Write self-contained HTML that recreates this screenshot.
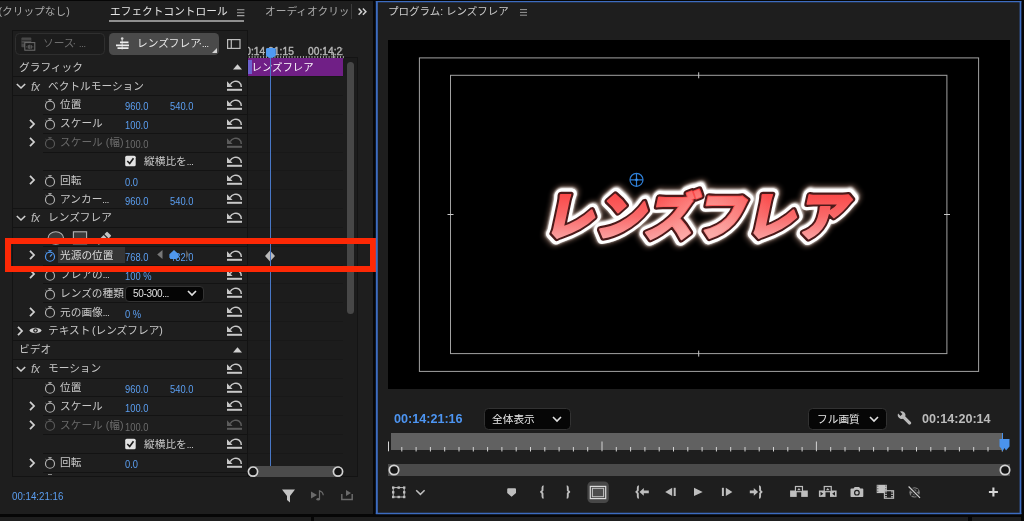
<!DOCTYPE html><html lang="ja"><head><meta charset="utf-8"><title>Premiere Pro - エフェクトコントロール</title><style>
*{box-sizing:border-box;margin:0;padding:0}
html,body{width:1024px;height:521px;overflow:hidden;background:#060606}
body{position:relative;font-family:"Liberation Sans","Noto Sans CJK JP",sans-serif;font-size:10.7px;color:#c4c4c4;-webkit-font-smoothing:antialiased}
.abs{position:absolute}
.t{position:absolute;white-space:nowrap;line-height:16px;height:16px}
#lp{will-change:transform;position:absolute;left:0;top:1px;width:373px;height:513px;background:#1e1e1e;overflow:hidden}
#rp{will-change:transform;position:absolute;left:376px;top:1px;width:645px;height:513px;background:#1e1e1e;border:1px solid transparent;background-clip:border-box;overflow:hidden}
#box{position:absolute;left:12px;top:28px;width:346px;height:447px;border:1px solid #131313;background:#1e1e1e}
.row{position:absolute;left:13px;width:234px}
.sepl{position:absolute;height:1px;background:#131313}
.lab{position:absolute;white-space:nowrap;line-height:16px;height:16px;color:#c9c9c9}
.val{position:absolute;white-space:nowrap;line-height:16px;height:16px;color:#5b9ff2;font-size:10.5px;letter-spacing:0;transform:scaleX(.89);transform-origin:0 50%}
.dim{color:#6c6c6c}
.el{font-family:"Liberation Sans",sans-serif;font-size:7px;font-weight:bold;letter-spacing:-.4px}
svg{position:absolute;overflow:visible}
</style></head><body>
<div class="abs" style="left:0;top:517px;width:311px;height:4px;background:#1e1e1e"></div>
<div class="abs" style="left:314px;top:517px;width:654px;height:4px;background:#1e1e1e"></div>
<div class="abs" style="left:972px;top:517px;width:49px;height:4px;background:#1e1e1e"></div>
<div id="lp"><div class="abs" style="left:0;top:1px;width:373px;height:512px">
<div class="t" style="left:-1.5px;top:1px;color:#a8a8a8">(クリップなし)</div>
<div class="t" style="left:110px;top:1px;color:#e4e4e4">エフェクトコントロール</div>
<div class="abs" style="left:109px;top:18px;width:135px;height:2px;background:#909090"></div>
<svg style="left:237.2px;top:7px" width="9" height="8"><path d="M0 .8h7.4M0 3.7h7.4M0 6.6h7.4" stroke="#a2a2a2" stroke-width="1.1"/></svg>
<div class="t" style="left:265px;top:1px;color:#a8a8a8;width:84px;overflow:hidden">オーディオクリップ</div>
<div class="abs" style="left:351px;top:2px;width:1px;height:15px;background:#3c3c3c"></div>
<svg style="left:358.3px;top:5.7px" width="10" height="8"><path d="M.6 .6l3 3.1-3 3.1M4.9 .6l3 3.1-3 3.1" fill="none" stroke="#d0d0d0" stroke-width="1.5"/></svg>
<div id="box"></div>
<div class="abs" style="left:248px;top:55px;width:110px;height:420px;background:#1c1c1c;border-top:1px solid #141414;border-right:1px solid #141414"></div>
<div class="abs" style="left:247px;top:28px;width:1px;height:447px;background:#131313"></div>
<div class="abs" style="left:248px;top:28px;width:111px;height:27px;background:#1e1e1e"></div>
<div class="abs" style="left:15px;top:31px;width:90px;height:22px;border:1px solid #2f2f2f;border-radius:4.5px;background:#1c1c1c"></div>
<svg style="left:21px;top:35px" width="15" height="14"><rect x=".4" y=".6" width="9.9" height="9.7" rx=".8" fill="#484848"/><path d="M.4 3.4h10M.4 6.2h10" stroke="#2a2a2a" stroke-width=".9"/><rect x="3.8" y="5.6" width="10" height="7.6" fill="#1c1c1c" stroke="#707070" stroke-width="1"/><path d="M5.8 9.4v1M7.3 8.2v3.4M8.8 7.7v4.4M10.3 8.2v3.4M11.8 9.4v1" stroke="#707070" stroke-width=".9"/></svg>
<div class="t" style="left:43px;top:33px;color:#6e6e6e">ソース<span style="margin-left:-2px">·</span><span class="el" style="margin-left:3px">…</span></div>
<div class="abs" style="left:109px;top:31px;width:110px;height:22px;background:#4a4a4a;border-radius:4.5px"></div>
<svg style="left:116px;top:35px" width="13" height="13"><path d="M6.2 1.5v11" stroke="#a9a9a9" stroke-width="1.3"/><circle cx="6.2" cy="1.5" r="1.3" fill="#d8d8d8"/><path d="M4 5.3h8.5M0 8.3h13M1.5 11.2h11" stroke="#ececec" stroke-width="1.7"/></svg>
<div class="t" style="left:137px;top:33px;color:#e8e8e8">レンズフレア<span style="margin-left:-2.5px">·</span><span class="el" style="margin-left:0px">…</span></div>
<svg style="left:212px;top:46px" width="5" height="5"><path d="M5 0v5h-5z" fill="#d4d4d4"/></svg>
<svg style="left:227px;top:37px" width="14" height="10"><rect x=".6" y=".6" width="12.4" height="8.8" fill="none" stroke="#bdbdbd" stroke-width="1.2"/><path d="M4.3 .6v8.8" stroke="#bdbdbd" stroke-width="1.2"/></svg>
<div class="abs" style="left:248px;top:40px;width:95px;height:16px;overflow:hidden"><div class="t" style="left:-8.5px;top:2px;color:#b6b6b6;font-size:10.2px;-webkit-text-stroke:.4px #b6b6b6;letter-spacing:.05px">00:14:21:15</div><div class="t" style="left:60px;top:2px;color:#b6b6b6;font-size:10.2px;-webkit-text-stroke:.4px #b6b6b6;letter-spacing:.05px">00:14:22</div></div>
<svg style="left:248px;top:54.4px" width="95" height="3"><path d="M1.30 0v2.2M4.15 0v2.2M7.00 0v2.2M9.85 0v2.2M12.70 0v2.2M15.55 0v2.2M18.40 0v2.2M21.25 0v2.2M24.10 0v2.2M26.95 0v2.2M29.80 0v2.2M32.65 0v2.2M35.50 0v2.2M38.35 0v2.2M41.20 0v2.2M44.05 0v2.2M46.90 0v2.2M49.75 0v2.2M52.60 0v2.2M55.45 0v2.2M58.30 0v2.2M61.15 0v2.2M64.00 0v2.2M66.85 0v2.2M69.70 0v2.2M72.55 0v2.2M75.40 0v2.2M78.25 0v2.2M81.10 0v2.2M83.95 0v2.2M86.80 0v2.2M89.65 0v2.2M92.50 0v2.2M95.35 0v2.2" stroke="#a4a4a4" stroke-width="1"/></svg>
<div class="abs" style="left:333px;top:51px;width:1px;height:5px;background:#b0b0b0"></div>
<div class="abs" style="left:248px;top:56px;width:95px;height:18px;background:#701f86"></div>
<div class="abs" style="left:248px;top:58px;width:4px;height:14px;background:#6d62cf"></div>
<div class="t" style="left:251.5px;top:58px;color:#fff;font-size:10.4px">レンズフレア</div>
<div class="abs" style="left:347px;top:60px;width:7px;height:252px;background:#474747;border-radius:4px"></div>
<div class="sepl" style="left:13px;top:74.0px;width:234px"></div>
<div class="sepl" style="left:248px;top:74.0px;width:95px;background:#181818"></div>
<div class="lab" style="left:19px;top:57.0px">グラフィック</div>
<svg style="left:233px;top:61.9px" width="9" height="6"><path d="M0 5.5L4.5 .3 9 5.5z" fill="#d0d0d0"/></svg>
<div class="sepl" style="left:13px;top:93.0px;width:234px"></div>
<div class="sepl" style="left:248px;top:93.0px;width:95px;background:#181818"></div>
<svg style="left:16px;top:81.0px" width="10" height="7"><path d="M.8 1l4.2 4L9.2 1" fill="none" stroke="#d0d0d0" stroke-width="1.6"/></svg>
<div class="t" style="left:31px;top:77px;font-style:italic;font-size:12.5px;color:#b4b4b4;letter-spacing:-.6px">fx</div>
<div class="lab" style="left:48px;top:76.0px">ベクトルモーション</div>
<svg style="left:227px;top:78.2px" width="15" height="12"><path d="M0 9.8h15" stroke="#c8c8c8" stroke-width="2"/><path d="M0 1.3v5.6h5.6z" fill="#c8c8c8"/><path d="M3.2 4.6C5.2 1.2 9.3 .2 12 2.2c1.6 1.2 2.3 2.9 2.3 4.7" fill="none" stroke="#c8c8c8" stroke-width="1.45"/></svg>
<div class="sepl" style="left:43px;top:112.0px;width:204px"></div>
<div class="sepl" style="left:248px;top:112.0px;width:95px;background:#181818"></div>
<svg style="left:44px;top:95.1px" width="12" height="15"><circle cx="6" cy="8.7" r="4.5" fill="none" stroke="#b4b4b4" stroke-width="1.150"/><path d="M4.3 2.7h3.4M6 2.7v1.6M1.7 4.3l1.1 1.1" fill="none" stroke="#b4b4b4" stroke-width="1"/></svg>
<div class="lab" style="left:60px;top:94.0px;color:#c9c9c9">位置</div>
<div class="val" style="left:124.5px;top:96.0px">960.0</div>
<div class="val" style="left:170.0px;top:96.0px">540.0</div>
<svg style="left:227px;top:97.0px" width="15" height="12"><path d="M0 9.8h15" stroke="#c8c8c8" stroke-width="2"/><path d="M0 1.3v5.6h5.6z" fill="#c8c8c8"/><path d="M3.2 4.6C5.2 1.2 9.3 .2 12 2.2c1.6 1.2 2.3 2.9 2.3 4.7" fill="none" stroke="#c8c8c8" stroke-width="1.45"/></svg>
<div class="sepl" style="left:43px;top:131.0px;width:204px"></div>
<div class="sepl" style="left:248px;top:131.0px;width:95px;background:#181818"></div>
<svg style="left:29px;top:116.5px" width="7" height="10"><path d="M1 .8l4 4.2L1 9.2" fill="none" stroke="#d0d0d0" stroke-width="1.8"/></svg>
<svg style="left:44px;top:113.9px" width="12" height="15"><circle cx="6" cy="8.7" r="4.5" fill="none" stroke="#b4b4b4" stroke-width="1.150"/><path d="M4.3 2.7h3.4M6 2.7v1.6M1.7 4.3l1.1 1.1" fill="none" stroke="#b4b4b4" stroke-width="1"/></svg>
<div class="lab" style="left:60px;top:113.0px;color:#c9c9c9">スケール</div>
<div class="val" style="left:124.5px;top:115.0px">100.0</div>
<svg style="left:227px;top:115.8px" width="15" height="12"><path d="M0 9.8h15" stroke="#c8c8c8" stroke-width="2"/><path d="M0 1.3v5.6h5.6z" fill="#c8c8c8"/><path d="M3.2 4.6C5.2 1.2 9.3 .2 12 2.2c1.6 1.2 2.3 2.9 2.3 4.7" fill="none" stroke="#c8c8c8" stroke-width="1.45"/></svg>
<div class="sepl" style="left:43px;top:150.0px;width:204px"></div>
<div class="sepl" style="left:248px;top:150.0px;width:95px;background:#181818"></div>
<svg style="left:29px;top:135.4px" width="7" height="10"><path d="M1 .8l4 4.2L1 9.2" fill="none" stroke="#d0d0d0" stroke-width="1.8"/></svg>
<svg style="left:44px;top:132.8px" width="12" height="15"><circle cx="6" cy="8.7" r="4.5" fill="none" stroke="#5a5a5a" stroke-width="1.150"/><path d="M4.3 2.7h3.4M6 2.7v1.6M1.7 4.3l1.1 1.1" fill="none" stroke="#5a5a5a" stroke-width="1"/></svg>
<div class="lab" style="left:60px;top:132.0px;color:#6a6a6a">スケール (幅)</div>
<div class="val dim" style="left:124.5px;top:134.0px">100.0</div>
<svg style="left:227px;top:134.7px" width="15" height="12"><path d="M0 9.8h15" stroke="#5c5c5c" stroke-width="2"/><path d="M0 1.3v5.6h5.6z" fill="#5c5c5c"/><path d="M3.2 4.6C5.2 1.2 9.3 .2 12 2.2c1.6 1.2 2.3 2.9 2.3 4.7" fill="none" stroke="#5c5c5c" stroke-width="1.45"/></svg>
<div class="sepl" style="left:43px;top:168.0px;width:204px"></div>
<div class="sepl" style="left:248px;top:168.0px;width:95px;background:#181818"></div>
<svg style="left:125px;top:153.2px" width="12" height="12"><rect x=".2" y=".7" width="10.5" height="10.5" rx="1.5" fill="#e3e3e3"/><path d="M2.3 6l2.4 2.5L8.5 3.2" fill="none" stroke="#1c1c1c" stroke-width="1.6"/></svg>
<div class="lab" style="left:144px;top:151.0px">縦横比を<span class="el">…</span></div>
<svg style="left:227px;top:153.5px" width="15" height="12"><path d="M0 9.8h15" stroke="#c8c8c8" stroke-width="2"/><path d="M0 1.3v5.6h5.6z" fill="#c8c8c8"/><path d="M3.2 4.6C5.2 1.2 9.3 .2 12 2.2c1.6 1.2 2.3 2.9 2.3 4.7" fill="none" stroke="#c8c8c8" stroke-width="1.45"/></svg>
<div class="sepl" style="left:43px;top:187.0px;width:204px"></div>
<div class="sepl" style="left:248px;top:187.0px;width:95px;background:#181818"></div>
<svg style="left:29px;top:173.1px" width="7" height="10"><path d="M1 .8l4 4.2L1 9.2" fill="none" stroke="#d0d0d0" stroke-width="1.8"/></svg>
<svg style="left:44px;top:170.5px" width="12" height="15"><circle cx="6" cy="8.7" r="4.5" fill="none" stroke="#b4b4b4" stroke-width="1.150"/><path d="M4.3 2.7h3.4M6 2.7v1.6M1.7 4.3l1.1 1.1" fill="none" stroke="#b4b4b4" stroke-width="1"/></svg>
<div class="lab" style="left:60px;top:170.0px;color:#c9c9c9">回転</div>
<div class="val" style="left:124.5px;top:172.0px">0.0</div>
<svg style="left:227px;top:172.4px" width="15" height="12"><path d="M0 9.8h15" stroke="#c8c8c8" stroke-width="2"/><path d="M0 1.3v5.6h5.6z" fill="#c8c8c8"/><path d="M3.2 4.6C5.2 1.2 9.3 .2 12 2.2c1.6 1.2 2.3 2.9 2.3 4.7" fill="none" stroke="#c8c8c8" stroke-width="1.45"/></svg>
<div class="sepl" style="left:13px;top:206.0px;width:234px"></div>
<div class="sepl" style="left:248px;top:206.0px;width:95px;background:#181818"></div>
<svg style="left:44px;top:189.3px" width="12" height="15"><circle cx="6" cy="8.7" r="4.5" fill="none" stroke="#b4b4b4" stroke-width="1.150"/><path d="M4.3 2.7h3.4M6 2.7v1.6M1.7 4.3l1.1 1.1" fill="none" stroke="#b4b4b4" stroke-width="1"/></svg>
<div class="lab" style="left:60px;top:189.0px;color:#c9c9c9">アンカー<span class="el">…</span></div>
<div class="val" style="left:124.5px;top:191.0px">960.0</div>
<div class="val" style="left:170.0px;top:191.0px">540.0</div>
<svg style="left:227px;top:191.2px" width="15" height="12"><path d="M0 9.8h15" stroke="#c8c8c8" stroke-width="2"/><path d="M0 1.3v5.6h5.6z" fill="#c8c8c8"/><path d="M3.2 4.6C5.2 1.2 9.3 .2 12 2.2c1.6 1.2 2.3 2.9 2.3 4.7" fill="none" stroke="#c8c8c8" stroke-width="1.45"/></svg>
<div class="sepl" style="left:13px;top:225.0px;width:234px"></div>
<div class="sepl" style="left:248px;top:225.0px;width:95px;background:#181818"></div>
<svg style="left:16px;top:212.8px" width="10" height="7"><path d="M.8 1l4.2 4L9.2 1" fill="none" stroke="#d0d0d0" stroke-width="1.6"/></svg>
<div class="t" style="left:31px;top:208px;font-style:italic;font-size:12.5px;color:#b4b4b4;letter-spacing:-.6px">fx</div>
<div class="lab" style="left:48px;top:207.0px">レンズフレア</div>
<svg style="left:227px;top:210.0px" width="15" height="12"><path d="M0 9.8h15" stroke="#c8c8c8" stroke-width="2"/><path d="M0 1.3v5.6h5.6z" fill="#c8c8c8"/><path d="M3.2 4.6C5.2 1.2 9.3 .2 12 2.2c1.6 1.2 2.3 2.9 2.3 4.7" fill="none" stroke="#c8c8c8" stroke-width="1.45"/></svg>
<div class="sepl" style="left:43px;top:244.0px;width:204px"></div>
<div class="sepl" style="left:248px;top:244.0px;width:95px;background:#181818"></div>
<svg style="left:47px;top:229.1px" width="42" height="14"><ellipse cx="8.8" cy="7" rx="7.7" ry="6.2" fill="#3a3a3a" stroke="#b4b4b4" stroke-width="1.1"/><rect x="26.4" y=".8" width="13.2" height="12" fill="#3a3a3a" stroke="#b4b4b4" stroke-width="1.1"/></svg>
<svg style="left:0;top:0" width="120" height="250"><g transform="translate(98 242.8) rotate(45)" fill="#c2c2c2"><path d="M0 0L3 -6v-5h-6v5z"/><rect x="-3" y="-15.8" width="6" height="3.8" rx=".6"/></g></svg>
<div class="sepl" style="left:43px;top:263.0px;width:204px"></div>
<div class="sepl" style="left:248px;top:263.0px;width:95px;background:#181818"></div>
<svg style="left:29px;top:248.4px" width="7" height="10"><path d="M1 .8l4 4.2L1 9.2" fill="none" stroke="#d0d0d0" stroke-width="1.8"/></svg>
<svg style="left:44px;top:245.8px" width="12" height="15"><circle cx="6" cy="8.7" r="4.5" fill="none" stroke="#4f98f0" stroke-width="1.150"/><path d="M4.3 2.7h3.4M6 2.7v1.6M1.7 4.3l1.1 1.1" fill="none" stroke="#4f98f0" stroke-width="1"/><path d="M6 8.7l2.1-2.6" stroke="#4f98f0" stroke-width="1.2"/></svg>
<div class="abs" style="left:58px;top:245.0px;width:67px;height:16px;background:#353535"></div>
<div class="lab" style="left:60px;top:245.0px;color:#dcdcdc">光源の位置</div>
<div class="val" style="left:124.6px;top:247.0px">768.0</div>
<div class="val" style="left:169.8px;top:247.0px">432.0</div>
<svg style="left:156px;top:248.3px" width="36" height="10"><path d="M6.5 0v9L1.2 4.5z" fill="#787878"/><path d="M18 0l4.6 4.2v3.6l-2.3 1.2h-4.6l-2.3-1.2v-3.6z" fill="#4f98f0"/><path d="M30 0v9l3-4.5z" fill="#6a6a6a" opacity=".85"/></svg>
<svg style="left:227px;top:247.7px" width="15" height="12"><path d="M0 9.8h15" stroke="#c8c8c8" stroke-width="2"/><path d="M0 1.3v5.6h5.6z" fill="#c8c8c8"/><path d="M3.2 4.6C5.2 1.2 9.3 .2 12 2.2c1.6 1.2 2.3 2.9 2.3 4.7" fill="none" stroke="#c8c8c8" stroke-width="1.45"/></svg>
<svg style="left:264px;top:247.5px" width="12" height="12"><path d="M6 .5l5 5.5-5 5.5-5-5.5z" fill="#b9b9b9"/></svg>
<div class="sepl" style="left:43px;top:281.0px;width:204px"></div>
<div class="sepl" style="left:248px;top:281.0px;width:95px;background:#181818"></div>
<svg style="left:29px;top:267.3px" width="7" height="10"><path d="M1 .8l4 4.2L1 9.2" fill="none" stroke="#d0d0d0" stroke-width="1.8"/></svg>
<svg style="left:44px;top:264.7px" width="12" height="15"><circle cx="6" cy="8.7" r="4.5" fill="none" stroke="#b4b4b4" stroke-width="1.150"/><path d="M4.3 2.7h3.4M6 2.7v1.6M1.7 4.3l1.1 1.1" fill="none" stroke="#b4b4b4" stroke-width="1"/></svg>
<div class="lab" style="left:60px;top:264.0px;color:#c9c9c9">フレアの<span class="el">…</span></div>
<div class="val" style="left:124.5px;top:266.0px">100 %</div>
<svg style="left:227px;top:266.6px" width="15" height="12"><path d="M0 9.8h15" stroke="#c8c8c8" stroke-width="2"/><path d="M0 1.3v5.6h5.6z" fill="#c8c8c8"/><path d="M3.2 4.6C5.2 1.2 9.3 .2 12 2.2c1.6 1.2 2.3 2.9 2.3 4.7" fill="none" stroke="#c8c8c8" stroke-width="1.45"/></svg>
<div class="sepl" style="left:43px;top:300.0px;width:204px"></div>
<div class="sepl" style="left:248px;top:300.0px;width:95px;background:#181818"></div>
<svg style="left:44px;top:283.5px" width="12" height="15"><circle cx="6" cy="8.7" r="4.5" fill="none" stroke="#b4b4b4" stroke-width="1.150"/><path d="M4.3 2.7h3.4M6 2.7v1.6M1.7 4.3l1.1 1.1" fill="none" stroke="#b4b4b4" stroke-width="1"/></svg>
<div class="lab" style="left:60px;top:283.0px">レンズの種類</div>
<div class="abs" style="left:125px;top:284px;width:79px;height:16px;background:#050505;border:1px solid #333;border-radius:4px"></div>
<div class="lab" style="left:133px;top:284.0px;color:#e0e0e0;font-size:10px;letter-spacing:-.3px">50-300<span class="el">…</span></div>
<svg style="left:187px;top:288.0px" width="10" height="7"><path d="M1 1l4 4 4-4" fill="none" stroke="#e0e0e0" stroke-width="1.7"/></svg>
<svg style="left:227px;top:285.4px" width="15" height="12"><path d="M0 9.8h15" stroke="#c8c8c8" stroke-width="2"/><path d="M0 1.3v5.6h5.6z" fill="#c8c8c8"/><path d="M3.2 4.6C5.2 1.2 9.3 .2 12 2.2c1.6 1.2 2.3 2.9 2.3 4.7" fill="none" stroke="#c8c8c8" stroke-width="1.45"/></svg>
<div class="sepl" style="left:13px;top:319.0px;width:234px"></div>
<div class="sepl" style="left:248px;top:319.0px;width:95px;background:#181818"></div>
<svg style="left:29px;top:304.9px" width="7" height="10"><path d="M1 .8l4 4.2L1 9.2" fill="none" stroke="#d0d0d0" stroke-width="1.8"/></svg>
<svg style="left:44px;top:302.3px" width="12" height="15"><circle cx="6" cy="8.7" r="4.5" fill="none" stroke="#b4b4b4" stroke-width="1.150"/><path d="M4.3 2.7h3.4M6 2.7v1.6M1.7 4.3l1.1 1.1" fill="none" stroke="#b4b4b4" stroke-width="1"/></svg>
<div class="lab" style="left:60px;top:302.0px;color:#c9c9c9">元の画像<span class="el">…</span></div>
<div class="val" style="left:124.5px;top:304.0px">0 %</div>
<svg style="left:227px;top:304.2px" width="15" height="12"><path d="M0 9.8h15" stroke="#c8c8c8" stroke-width="2"/><path d="M0 1.3v5.6h5.6z" fill="#c8c8c8"/><path d="M3.2 4.6C5.2 1.2 9.3 .2 12 2.2c1.6 1.2 2.3 2.9 2.3 4.7" fill="none" stroke="#c8c8c8" stroke-width="1.45"/></svg>
<div class="sepl" style="left:13px;top:338.0px;width:234px"></div>
<div class="sepl" style="left:248px;top:338.0px;width:95px;background:#181818"></div>
<svg style="left:17px;top:323.8px" width="7" height="10"><path d="M1 .8l4 4.2L1 9.2" fill="none" stroke="#d0d0d0" stroke-width="1.8"/></svg>
<svg style="left:29px;top:324.2px" width="13" height="9"><path d="M.3 4.5C2.5 .8 10.5 .8 12.7 4.5 10.5 8.2 2.5 8.2 .3 4.5z" fill="#d0d0d0"/><circle cx="6.5" cy="4.5" r="2.3" fill="#1e1e1e"/><circle cx="6.5" cy="4.5" r="1.1" fill="#d0d0d0"/></svg>
<div class="lab" style="left:48px;top:320.0px"><span style="word-spacing:-1.5px">テキスト (レンズフレア)</span></div>
<svg style="left:227px;top:323.1px" width="15" height="12"><path d="M0 9.8h15" stroke="#c8c8c8" stroke-width="2"/><path d="M0 1.3v5.6h5.6z" fill="#c8c8c8"/><path d="M3.2 4.6C5.2 1.2 9.3 .2 12 2.2c1.6 1.2 2.3 2.9 2.3 4.7" fill="none" stroke="#c8c8c8" stroke-width="1.45"/></svg>
<div class="sepl" style="left:13px;top:357.0px;width:234px"></div>
<div class="sepl" style="left:248px;top:357.0px;width:95px;background:#181818"></div>
<div class="lab" style="left:19px;top:339.0px">ビデオ</div>
<svg style="left:233px;top:344.5px" width="9" height="6"><path d="M0 5.5L4.5 .3 9 5.5z" fill="#d0d0d0"/></svg>
<div class="sepl" style="left:13px;top:376.0px;width:234px"></div>
<div class="sepl" style="left:248px;top:376.0px;width:95px;background:#181818"></div>
<svg style="left:16px;top:363.6px" width="10" height="7"><path d="M.8 1l4.2 4L9.2 1" fill="none" stroke="#d0d0d0" stroke-width="1.6"/></svg>
<div class="t" style="left:31px;top:359px;font-style:italic;font-size:12.5px;color:#b4b4b4;letter-spacing:-.6px">fx</div>
<div class="lab" style="left:48px;top:358.0px">モーション</div>
<svg style="left:227px;top:360.8px" width="15" height="12"><path d="M0 9.8h15" stroke="#c8c8c8" stroke-width="2"/><path d="M0 1.3v5.6h5.6z" fill="#c8c8c8"/><path d="M3.2 4.6C5.2 1.2 9.3 .2 12 2.2c1.6 1.2 2.3 2.9 2.3 4.7" fill="none" stroke="#c8c8c8" stroke-width="1.45"/></svg>
<div class="sepl" style="left:43px;top:394.0px;width:204px"></div>
<div class="sepl" style="left:248px;top:394.0px;width:95px;background:#181818"></div>
<svg style="left:44px;top:377.7px" width="12" height="15"><circle cx="6" cy="8.7" r="4.5" fill="none" stroke="#b4b4b4" stroke-width="1.150"/><path d="M4.3 2.7h3.4M6 2.7v1.6M1.7 4.3l1.1 1.1" fill="none" stroke="#b4b4b4" stroke-width="1"/></svg>
<div class="lab" style="left:60px;top:377.0px;color:#c9c9c9">位置</div>
<div class="val" style="left:124.5px;top:379.0px">960.0</div>
<div class="val" style="left:170.0px;top:379.0px">540.0</div>
<svg style="left:227px;top:379.6px" width="15" height="12"><path d="M0 9.8h15" stroke="#c8c8c8" stroke-width="2"/><path d="M0 1.3v5.6h5.6z" fill="#c8c8c8"/><path d="M3.2 4.6C5.2 1.2 9.3 .2 12 2.2c1.6 1.2 2.3 2.9 2.3 4.7" fill="none" stroke="#c8c8c8" stroke-width="1.45"/></svg>
<div class="sepl" style="left:43px;top:413.0px;width:204px"></div>
<div class="sepl" style="left:248px;top:413.0px;width:95px;background:#181818"></div>
<svg style="left:29px;top:399.1px" width="7" height="10"><path d="M1 .8l4 4.2L1 9.2" fill="none" stroke="#d0d0d0" stroke-width="1.8"/></svg>
<svg style="left:44px;top:396.5px" width="12" height="15"><circle cx="6" cy="8.7" r="4.5" fill="none" stroke="#b4b4b4" stroke-width="1.150"/><path d="M4.3 2.7h3.4M6 2.7v1.6M1.7 4.3l1.1 1.1" fill="none" stroke="#b4b4b4" stroke-width="1"/></svg>
<div class="lab" style="left:60px;top:396.0px;color:#c9c9c9">スケール</div>
<div class="val" style="left:124.5px;top:398.0px">100.0</div>
<svg style="left:227px;top:398.4px" width="15" height="12"><path d="M0 9.8h15" stroke="#c8c8c8" stroke-width="2"/><path d="M0 1.3v5.6h5.6z" fill="#c8c8c8"/><path d="M3.2 4.6C5.2 1.2 9.3 .2 12 2.2c1.6 1.2 2.3 2.9 2.3 4.7" fill="none" stroke="#c8c8c8" stroke-width="1.45"/></svg>
<div class="sepl" style="left:43px;top:432.0px;width:204px"></div>
<div class="sepl" style="left:248px;top:432.0px;width:95px;background:#181818"></div>
<svg style="left:29px;top:418.0px" width="7" height="10"><path d="M1 .8l4 4.2L1 9.2" fill="none" stroke="#d0d0d0" stroke-width="1.8"/></svg>
<svg style="left:44px;top:415.4px" width="12" height="15"><circle cx="6" cy="8.7" r="4.5" fill="none" stroke="#5a5a5a" stroke-width="1.150"/><path d="M4.3 2.7h3.4M6 2.7v1.6M1.7 4.3l1.1 1.1" fill="none" stroke="#5a5a5a" stroke-width="1"/></svg>
<div class="lab" style="left:60px;top:415.0px;color:#6a6a6a">スケール (幅)</div>
<div class="val dim" style="left:124.5px;top:417.0px">100.0</div>
<svg style="left:227px;top:417.3px" width="15" height="12"><path d="M0 9.8h15" stroke="#5c5c5c" stroke-width="2"/><path d="M0 1.3v5.6h5.6z" fill="#5c5c5c"/><path d="M3.2 4.6C5.2 1.2 9.3 .2 12 2.2c1.6 1.2 2.3 2.9 2.3 4.7" fill="none" stroke="#5c5c5c" stroke-width="1.45"/></svg>
<div class="sepl" style="left:43px;top:451.0px;width:204px"></div>
<div class="sepl" style="left:248px;top:451.0px;width:95px;background:#181818"></div>
<svg style="left:125px;top:435.8px" width="12" height="12"><rect x=".2" y=".7" width="10.5" height="10.5" rx="1.5" fill="#e3e3e3"/><path d="M2.3 6l2.4 2.5L8.5 3.2" fill="none" stroke="#1c1c1c" stroke-width="1.6"/></svg>
<div class="lab" style="left:144px;top:434.0px">縦横比を<span class="el">…</span></div>
<svg style="left:227px;top:436.1px" width="15" height="12"><path d="M0 9.8h15" stroke="#c8c8c8" stroke-width="2"/><path d="M0 1.3v5.6h5.6z" fill="#c8c8c8"/><path d="M3.2 4.6C5.2 1.2 9.3 .2 12 2.2c1.6 1.2 2.3 2.9 2.3 4.7" fill="none" stroke="#c8c8c8" stroke-width="1.45"/></svg>
<div class="sepl" style="left:43px;top:470.0px;width:204px"></div>
<div class="sepl" style="left:248px;top:470.0px;width:95px;background:#181818"></div>
<svg style="left:29px;top:455.7px" width="7" height="10"><path d="M1 .8l4 4.2L1 9.2" fill="none" stroke="#d0d0d0" stroke-width="1.8"/></svg>
<svg style="left:44px;top:453.1px" width="12" height="15"><circle cx="6" cy="8.7" r="4.5" fill="none" stroke="#b4b4b4" stroke-width="1.150"/><path d="M4.3 2.7h3.4M6 2.7v1.6M1.7 4.3l1.1 1.1" fill="none" stroke="#b4b4b4" stroke-width="1"/></svg>
<div class="lab" style="left:60px;top:452.0px;color:#c9c9c9">回転</div>
<div class="val" style="left:124.5px;top:454.0px">0.0</div>
<svg style="left:227px;top:455.0px" width="15" height="12"><path d="M0 9.8h15" stroke="#c8c8c8" stroke-width="2"/><path d="M0 1.3v5.6h5.6z" fill="#c8c8c8"/><path d="M3.2 4.6C5.2 1.2 9.3 .2 12 2.2c1.6 1.2 2.3 2.9 2.3 4.7" fill="none" stroke="#c8c8c8" stroke-width="1.45"/></svg>
<div class="abs" style="left:48px;top:472px;width:4px;height:1px;background:#8a8a8a"></div>
<div class="abs" style="left:0;top:475px;width:373px;height:40px;background:#1e1e1e"></div>
<div class="abs" style="left:12px;top:474px;width:346px;height:1px;background:#131313"></div>
<div class="abs" style="left:270px;top:50px;width:1px;height:414px;background:#4877c6"></div>
<svg style="left:265.9px;top:46px" width="10" height="10"><path d="M1.5 0h6.8a1.5 1.5 0 0 1 1.5 1.5v6L7 9.7h-4.2L0 7.5v-6A1.5 1.5 0 0 1 1.5 0z" fill="#4f9af3"/></svg>
<div class="abs" style="left:250px;top:464px;width:90px;height:11px;background:#4b4b4b"></div>
<svg style="left:246.5px;top:464px" width="12" height="12"><circle cx="6" cy="5.6" r="4.6" fill="#141414" stroke="#d2d2d2" stroke-width="1.7"/></svg>
<svg style="left:331.5px;top:464px" width="12" height="12"><circle cx="6" cy="5.6" r="4.6" fill="#141414" stroke="#d2d2d2" stroke-width="1.7"/></svg>
<div class="t" style="left:11.7px;top:486px;color:#5b9ff2;font-size:11.3px;transform:scaleX(.86);transform-origin:0 50%">00:14:21:16</div>
<svg style="left:282px;top:487px" width="13" height="15"><path d="M0 .5h13L8 7v6.5L5 11V7z" fill="#c4c4c4"/></svg>
<svg style="left:311px;top:488px" width="15" height="11"><path d="M0 1.5v7l6-3.5z" fill="#6a6a6a"/><path d="M8.5 9.5V.8c2 .5 3.5 2 3.8 4.5" fill="none" stroke="#6a6a6a" stroke-width="1.2"/><ellipse cx="7.2" cy="9.3" rx="1.8" ry="1.3" fill="#6a6a6a"/></svg>
<svg style="left:341px;top:488px" width="12" height="11"><path d="M.8 4v5.5h10.4V4" fill="none" stroke="#6a6a6a" stroke-width="1.5"/><path d="M5 0l5 3-5 3z" fill="#6a6a6a"/></svg>
</div></div>
<div class="abs" style="left:5px;top:238px;width:371px;height:34px;border:6px solid #fd2805;z-index:20"></div>
<div id="rp">
<div class="t" style="left:11px;top:2px;color:#cdcdcd;font-size:10.5px;transform:translateY(-.7px)">プログラム: レンズフレア</div>
<svg style="left:143px;top:7px" width="8" height="7"><path d="M0 .6h7M0 3.4h7M0 6.2h7" stroke="#9a9a9a" stroke-width="1"/></svg>
<div class="abs" style="left:11px;top:38px;width:622px;height:349px;background:#000;overflow:hidden" id="mon">
<svg style="left:0;top:0" width="622" height="349"><g fill="none" stroke="#a2a2a2" stroke-width="1"><rect x="31.4" y="17.9" width="559.2" height="313.5"/><rect x="62.5" y="35.3" width="496.4" height="278.3"/></g><path d="M310.7 32.3v6M310.7 310.6v6M59.5 174.5h6M556 174.5h6" stroke="#c8c8c8" stroke-width="1"/></svg>
<svg style="left:0;top:0" width="622" height="349" viewBox="0 0 622 349">
<defs>
<linearGradient id="tg" x1="0" y1="0" x2="0" y2="1"><stop offset="0" stop-color="#fb4040"/><stop offset=".5" stop-color="#f96a6a"/><stop offset="1" stop-color="#fbb2b2"/></linearGradient>
<radialGradient id="fl" gradientUnits="userSpaceOnUse" cx="165" cy="-22" r="60"><stop offset="0" stop-color="#ffd8d0" stop-opacity=".5"/><stop offset="1" stop-color="#ffd8d0" stop-opacity="0"/></radialGradient>
<filter id="glow" x="-10%" y="-30%" width="120%" height="160%"><feGaussianBlur stdDeviation="2.6"/></filter>
<filter id="glow2" x="-10%" y="-30%" width="120%" height="160%"><feGaussianBlur stdDeviation="1.2"/></filter>
</defs>
<g transform="translate(155 194.5) skewX(-12) scale(.975 1)" font-family="'Liberation Sans','Noto Sans CJK JP',sans-serif" font-weight="900" font-size="52" stroke-linejoin="round">
<text x="0" y="0" fill="none" stroke="#e8b49c" stroke-width="17.5" filter="url(#glow)" opacity=".45">レンズフレア</text>
<text x="0" y="0" fill="none" stroke="#fff" stroke-width="13.6" filter="url(#glow2)">レンズフレア</text>
<text x="0" y="0" fill="none" stroke="#fff" stroke-width="12.8">レンズフレア</text>
<text x="0" y="0" fill="none" stroke="#4c1a1a" stroke-width="6.4">レンズフレア</text>
<text x="0" y="0" fill="url(#tg)" stroke="url(#tg)" stroke-width="2">レンズフレア</text>
<text x="0" y="0" fill="url(#fl)">レンズフレア</text>
</g>
<g stroke="#2f7fd6" stroke-width="1.2" fill="none"><circle cx="248.5" cy="139.8" r="6.5"/><path d="M248.5 133.3v13M242 139.8h13"/><circle cx="248.5" cy="139.8" r="1.3" fill="#3f93ea" stroke="none"/></g>
</svg>
</div>
<div class="t" style="left:17px;top:409px;color:#4d95f2;font-weight:bold;font-size:12.6px;letter-spacing:0">00:14:21:16</div>
<div class="abs" style="left:107px;top:406px;width:87px;height:22px;background:#060606;border:1px solid #323232;border-radius:4.5px"></div>
<div class="t" style="left:115px;top:409px;color:#e8e8e8">全体表示</div>
<svg style="left:175px;top:414px" width="10" height="7"><path d="M1 1l4 4 4-4" fill="none" stroke="#e0e0e0" stroke-width="1.6"/></svg>
<div class="abs" style="left:431px;top:406px;width:79px;height:22px;background:#060606;border:1px solid #323232;border-radius:4.5px"></div>
<div class="t" style="left:440px;top:409px;color:#e8e8e8">フル画質</div>
<svg style="left:492px;top:414px" width="10" height="7"><path d="M1 1l4 4 4-4" fill="none" stroke="#e0e0e0" stroke-width="1.6"/></svg>
<svg style="left:518px;top:408px" width="20" height="20"><g transform="translate(6.6 5.1) rotate(45)"><circle r="3.7" fill="#bababa"/><rect x="1.5" y="-1.650" width="11.3" height="3.3" rx="1.4" fill="#bababa"/><rect x="-4.5" y="-1.350" width="4.3" height="2.7" fill="#1e1e1e"/></g></svg>
<div class="t" style="left:545px;top:409px;color:#bcbcbc;font-weight:bold;font-size:12.6px;letter-spacing:0">00:14:20:14</div>
<div class="abs" style="left:14px;top:431px;width:612px;height:17px;background:#616161"></div>
<svg style="left:11px;top:431px" width="620" height="19"><path d="M0.5 8.5v9.8M13.8 14v4.5M28.1 14v4.5M42.4 14v4.5M56.7 14v4.5M71.0 14v4.5M85.3 14v4.5M99.6 14v4.5M113.9 14v4.5M128.2 14v4.5M142.5 14v4.5M156.8 14v4.5M171.1 14v4.5M185.4 14v4.5M199.7 14v4.5M214.0 8.5v9.8M228.3 14v4.5M242.6 14v4.5M256.9 14v4.5M271.2 14v4.5M285.5 14v4.5M299.8 14v4.5M314.1 14v4.5M328.4 14v4.5M342.7 14v4.5M357.0 14v4.5M371.2 14v4.5M385.5 14v4.5M399.8 14v4.5M414.1 14v4.5M428.4 8.5v9.8M442.7 14v4.5M457.0 14v4.5M471.3 14v4.5M485.6 14v4.5M499.9 14v4.5M514.2 14v4.5M528.5 14v4.5M542.8 14v4.5M557.1 14v4.5M571.4 14v4.5M585.7 14v4.5M600.0 14v4.5M614.3 14v4.5" stroke="#d4d4d4" stroke-width="1"/></svg>
<div class="abs" style="left:625px;top:431px;width:1px;height:18px;background:#4a93ee"></div>
<svg style="left:622px;top:437px" width="11" height="12"><path d="M.5 0h10v7.5L7 11.5 5.5 9 4 11.5.5 7.5z" fill="#4a93ee"/></svg>
<div class="abs" style="left:11px;top:462px;width:622px;height:12px;background:#4b4b4b"></div>
<svg style="left:10.5px;top:462px" width="12" height="12"><circle cx="6" cy="6" r="4.7" fill="#141414" stroke="#d2d2d2" stroke-width="1.7"/></svg>
<svg style="left:622.0px;top:462px" width="12" height="12"><circle cx="6" cy="6" r="4.7" fill="#141414" stroke="#d2d2d2" stroke-width="1.7"/></svg>
<svg style="left:11px;top:478px" width="622" height="26" viewBox="0 0 622 26"><rect x="5.2" y="7.6" width="11" height="9.4" fill="none" stroke="#bebebe" stroke-width="1"/><rect x="4.0" y="6.4" width="2.4" height="2.4" fill="#bebebe"/><rect x="4.0" y="11.1" width="2.4" height="2.4" fill="#bebebe"/><rect x="4.0" y="15.8" width="2.4" height="2.4" fill="#bebebe"/><rect x="9.5" y="6.4" width="2.4" height="2.4" fill="#bebebe"/><rect x="9.5" y="15.8" width="2.4" height="2.4" fill="#bebebe"/><rect x="15.0" y="6.4" width="2.4" height="2.4" fill="#bebebe"/><rect x="15.0" y="11.1" width="2.4" height="2.4" fill="#bebebe"/><rect x="15.0" y="15.8" width="2.4" height="2.4" fill="#bebebe"/><path d="M28.2 10.2l4.2 4.2 4.2-4.2" fill="none" stroke="#bebebe" stroke-width="1.5"/><path d="M120.2 8.2h6.8a1 1 0 0 1 1 1v3.8l-4.4 3.7-4.4-3.7v-3.8a1 1 0 0 1 1-1z" fill="#bebebe"/><path d="M155.6 6.2C154.7 6.2 154.5 6.6 154.5 7.8V10.4 L153.0 11.9 L154.5 13.4 V16.2C154.5 17.4 154.7 17.8 155.6 17.8" fill="none" stroke="#bebebe" stroke-width="1.9" stroke-linejoin="round"/><path d="M178.7 6.2C179.6 6.2 179.8 6.6 179.8 7.8V10.4 L181.3 11.9 L179.8 13.4 V16.2C179.8 17.4 179.6 17.8 178.7 17.8" fill="none" stroke="#bebebe" stroke-width="1.9" stroke-linejoin="round"/><rect x="199.4" y="1.5" width="21.5" height="21.5" rx="4.5" fill="#474747"/><rect x="202.3" y="6.4" width="15.4" height="12.2" fill="none" stroke="#dadada" stroke-width="1.2"/><rect x="204.4" y="8.3" width="11.2" height="8.4" fill="#4d4d4d" stroke="#c4c4c4" stroke-width="1"/><path d="M250.9 6.2C250.0 6.2 249.8 6.6 249.8 7.8V10.4 L248.3 11.9 L249.8 13.4 V16.2C249.8 17.4 250.0 17.8 250.9 17.8" fill="none" stroke="#bebebe" stroke-width="1.9" stroke-linejoin="round"/><path d="M260.8 10.5h-5v-2.5l-4.3 3.9 4.3 3.9v-2.6h5z" fill="#bebebe"/><path d="M284.2 7.8v8.2l-7-4.1z" fill="#bebebe"/><path d="M286.7 7.8v8.2" stroke="#bebebe" stroke-width="2"/><path d="M306 7.7v8.4l8.7-4.2z" fill="#bebebe"/><path d="M334.9 7.8v8.2" stroke="#bebebe" stroke-width="2"/><path d="M337.8 7.8v8.2l6.6-4.1z" fill="#bebebe"/><path d="M371.0 6.2C371.9 6.2 372.1 6.6 372.1 7.8V10.4 L373.6 11.9 L372.1 13.4 V16.2C372.1 17.4 371.9 17.8 371.0 17.8" fill="none" stroke="#bebebe" stroke-width="1.9" stroke-linejoin="round"/><path d="M361.8 10.5h4v-2.5l4.3 3.9-4.3 3.9v-2.6h-4z" fill="#bebebe"/><rect x="402.1" y="10.5" width="6.6" height="6.4" fill="#bebebe"/><rect x="413.2" y="10.5" width="6.6" height="6.4" fill="#bebebe"/><rect x="407.45" y="6.5" width="7" height="5.2" fill="#1e1e1e" stroke="#bebebe" stroke-width="1.2"/><path d="M409.15 10.3l1.8-2.2 1.8 2.2z" fill="#bebebe"/><rect x="430.9" y="10.5" width="6.6" height="6.4" fill="#bebebe"/><rect x="442.0" y="10.5" width="6.6" height="6.4" fill="#bebebe"/><path d="M432.5 11.7v4l2.8-2z" fill="#1e1e1e"/><path d="M447.0 11.7v4l-2.8-2z" fill="#1e1e1e"/><rect x="436.25" y="6.5" width="7" height="5.2" fill="#1e1e1e" stroke="#bebebe" stroke-width="1.2"/><path d="M437.95 10.3l1.8-2.2 1.8 2.2z" fill="#bebebe"/><path d="M463.3 8.6h2.2l1.2-1.7h4.4l1.2 1.7h2.2a.8 .8 0 0 1 .8 .8v6.8a.8 .8 0 0 1-.8 .8h-11.2a.8 .8 0 0 1-.8-.8v-6.8a.8 .8 0 0 1 .8-.8z" fill="#bebebe"/><circle cx="468.9" cy="12.7" r="2.3" fill="#bebebe" stroke="#1e1e1e" stroke-width="1.2"/><rect x="488.7" y="4.8" width="10.2" height="8.3" fill="#c2c2c2"/><path d="M489.8 5.5v7M497.8 5.5v7" stroke="#555" stroke-width="1" stroke-dasharray="1.2 1.4"/><rect x="496.4" y="10.7" width="9.2" height="7.6" fill="#1e1e1e" stroke="#bebebe" stroke-width="1.1"/><path d="M498 11.3v6.5M504 11.3v6.5" stroke="#bebebe" stroke-width="1.6" stroke-dasharray="1.3 1.1"/><circle cx="526.6" cy="12.4" r="5.2" fill="#808080"/><path d="M525 9.4a3 3 0 0 1 4.5 1.5m.2-2v2.2h-2.2M528.4 15.4a3 3 0 0 1-4.5-1.5m-.2 2v-2.2h2.2" fill="none" stroke="#1e1e1e" stroke-width="1.1"/><path d="M520.4 6.3L532.2 18.1" stroke="#1e1e1e" stroke-width="3.2"/><path d="M520.6 6.5L532 17.9" stroke="#cfcfcf" stroke-width="1.2"/><path d="M605.4 7.5v9M600.9 12h9" stroke="#d6d6d6" stroke-width="2.1"/></svg>
</div>
<svg style="left:0;top:0;z-index:30" width="1024" height="521"><g stroke="#3d6cc0" fill="none"><path d="M375.8 1.650H1021.3" stroke-width="1.250"/><path d="M376.8 1.1V514.1" stroke-width="2"/><path d="M1020.5 1.1V514.1" stroke-width="1.7"/><path d="M375.8 513.4H1021.3" stroke-width="1.5"/></g></svg>
</body></html>
